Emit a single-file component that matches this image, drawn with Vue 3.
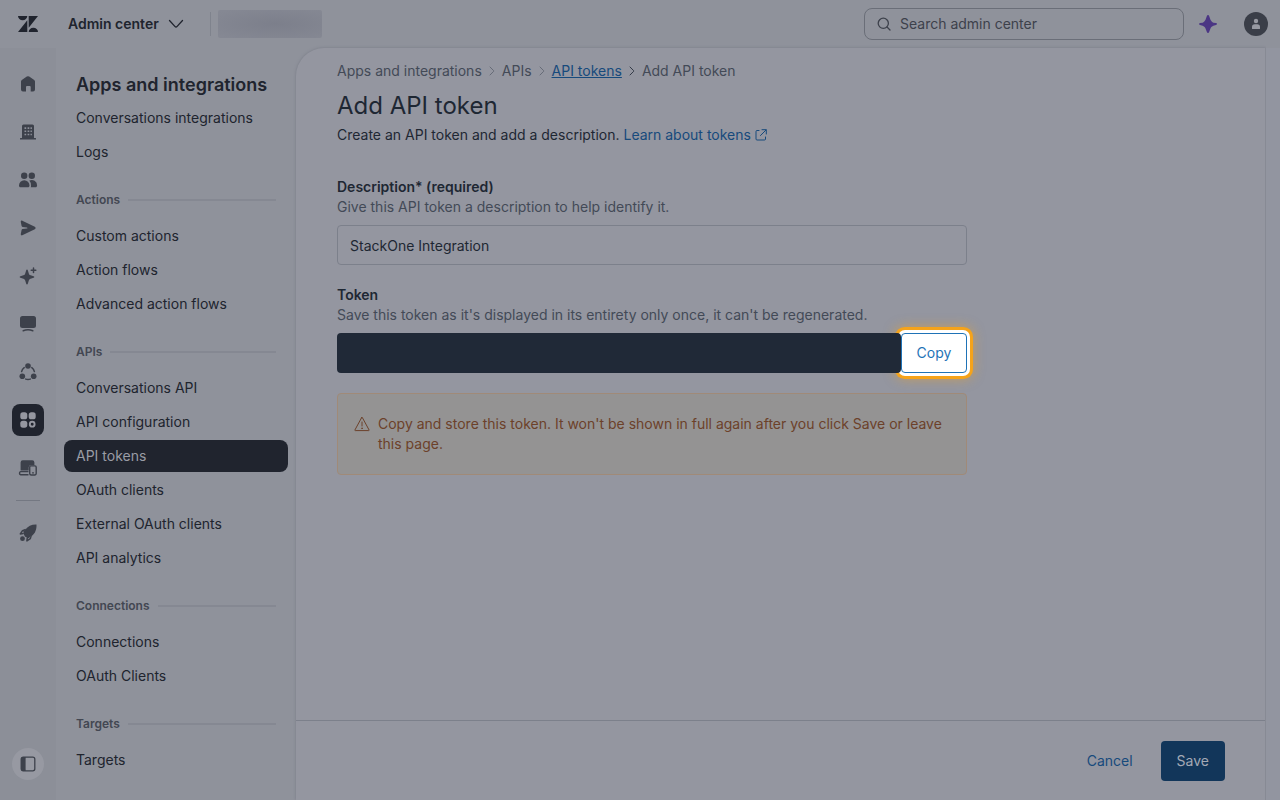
<template>
  <div class="app">
    <header class="topbar">
      <a href="#" class="logo" aria-label="Home">
        <svg width="20" height="16" viewBox="0 0 20 16" fill="currentColor">
          <path d="M9.3 4.3V16H0zM9.3 0A4.65 4.2 0 0 1 0 0zM10.7 16a4.65 4.2 0 0 1 9.3 0zM10.7 11.7V0H20z" />
        </svg>
      </a>
      <button type="button" class="product-switch">
        <span>Admin center</span>
        <svg width="16" height="16" viewBox="0 0 16 16" fill="none" stroke="currentColor" stroke-width="1.3" stroke-linecap="round">
          <path d="M1.5 4.5l5.6 6.1a1.2 1.2 0 0 0 1.8 0l5.6-6.1" />
        </svg>
      </button>
      <span class="divider"></span>
      <span class="account"></span>
      <label class="search">
        <svg width="14" height="14" viewBox="0 0 14 14" fill="none" stroke="currentColor" stroke-width="1.3" stroke-linecap="round">
          <circle cx="6.3" cy="6.3" r="5.1" />
          <path d="M10 10l3 3" />
        </svg>
        <input type="text" placeholder="Search admin center" aria-label="Search admin center" />
      </label>
      <button type="button" class="icon-btn copilot" aria-label="Copilot">
        <svg width="18" height="18" viewBox="0 0 16 16" fill="currentColor">
          <path d="M8 0c.5 0 .8.3 1 .9l1.200 3.300c.4 1 1.600 2.200 2.600 2.600l2.300.4c.6.2.9.4.9.8s-.3.700-.9.900l-2.300.700c-1 .4-2.200 1.400-2.600 2.400L9 15.100c-.2.600-.5.900-1 .9s-.8-.3-1-.9l-1.200-3.100c-.4-1-1.600-2-2.600-2.400L.9 8.900C.3 8.700 0 8.400 0 8s.3-.7.9-.9l2.300-.3c1-.4 2.200-1.600 2.600-2.600L7 .9C7.200.3 7.500 0 8 0z" />
        </svg>
      </button>
      <button type="button" class="icon-btn avatar" aria-label="Profile">
        <svg width="10" height="12" viewBox="0 0 10 12" fill="currentColor">
          <circle cx="5" cy="3" r="2.200" />
          <path d="M1 10.500V9a2.800 2.800 0 0 1 2.800-2.800h2.400A2.800 2.800 0 0 1 9 9v1.500a.5.5 0 0 1-.5.5h-7a.5.5 0 0 1-.5-.5z" />
        </svg>
      </button>
    </header>

    <div class="body">
      <nav class="rail" aria-label="Main">
        <a href="#" class="rail-item" aria-label="Home">
          <svg width="16" height="16" viewBox="0 0 16 16" fill="currentColor">
            <path d="M6.800.6a2 2 0 0 1 2.400 0l5 3.400c.5.400.8 1 .8 1.600V13.500a2 2 0 0 1-2 2h-2.300V11a1 1 0 0 0-1-1H7a1 1 0 0 0-1 1v4.500H3a2 2 0 0 1-2-2V5.600C1 5 1.300 4.400 1.800 4z" />
          </svg>
        </a>
        <a href="#" class="rail-item" aria-label="Account">
          <svg width="16" height="16" viewBox="0 0 16 16" fill="currentColor">
            <path fill-rule="evenodd" d="M3.500.5h9a1.500 1.500 0 0 1 1.500 1.500V14h1.400a.8.8 0 0 1 0 1.600H.6A.8.8 0 0 1 .6 14H2V2A1.500 1.500 0 0 1 3.500.5zM4.500 3.300v1.600h1.700V3.300zM7.600 3.300v1.600h1.700V3.300zM10.500 3.300v1.600h1.400V3.300zM4.500 6.500v1.600h1.700V6.500zM7.600 6.500v1.600h1.700V6.500zM10.500 6.500v1.600h1.400V6.500zM4.500 9.700v1.600h1.700V9.700zM7.600 9.700v1.600h1.700V9.700zM10.500 9.700v1.600h1.400V9.700z" />
          </svg>
        </a>
        <a href="#" class="rail-item" aria-label="People">
          <svg width="20" height="16" viewBox="0 0 20 16" fill="currentColor">
            <circle cx="6.200" cy="3.700" r="3.200" />
            <circle cx="13.800" cy="3.700" r="3.200" />
            <path d="M1 13.500A5.300 5.300 0 0 1 6.200 8.200a5.300 5.300 0 0 1 5.300 5.300c0 1-.6 1.800-1.600 1.800H2.600c-1 0-1.600-.8-1.600-1.800zM11.300 8.600a5.300 5.300 0 0 1 7.800 4.900c0 1-.7 1.800-1.700 1.800h-4.700c.3-.6.400-1.200.3-1.800a7 7 0 0 0-1.700-4.900z" />
          </svg>
        </a>
        <a href="#" class="rail-item" aria-label="Channels">
          <svg width="16" height="16" viewBox="0 0 16 16" fill="currentColor">
            <path d="M2.300.7l12.500 6.100c1 .5 1 1.900 0 2.400L2.300 15.300c-.8.4-1.700-.3-1.500-1.200L1.600 10c.1-.5.5-.8 1-.9l4.300-.5c.7-.1.7-1.100 0-1.200L2.600 6.900c-.5-.1-.9-.4-1-.9L.8 1.900C.6 1 1.500.3 2.300.7z" />
          </svg>
        </a>
        <a href="#" class="rail-item" aria-label="AI">
          <svg width="18" height="18" viewBox="0 0 18 18" fill="currentColor">
            <path d="M8 2.500c.4 0 .7.300.8.700l1 3.300c.3 1 .8 1.500 1.800 1.800l3 .9c.4.100.700.400.700.800s-.3.700-.7.800l-3 .9c-1 .3-1.500.8-1.800 1.800l-1 3.300c-.1.400-.4.700-.8.700s-.7-.3-.8-.7l-1-3.300c-.3-1-.8-1.500-1.800-1.800l-3-.9c-.4-.1-.7-.4-.7-.8s.3-.7.700-.8l3-.9c1-.3 1.500-.8 1.800-1.800l1-3.300c.1-.4.4-.7.800-.7z" />
            <path d="M14.500 1v4.600M12.200 3.300h4.600" stroke="currentColor" stroke-width="1.500" stroke-linecap="round" />
          </svg>
        </a>
        <a href="#" class="rail-item" aria-label="Workspaces">
          <svg width="18" height="16" viewBox="0 0 18 16" fill="currentColor">
            <rect x="1" y="0" width="16" height="12" rx="2.500" />
            <path d="M4.200 14.700Q9 12.800 13.800 14.700" fill="none" stroke="currentColor" stroke-width="1.500" stroke-linecap="round" />
          </svg>
        </a>
        <a href="#" class="rail-item" aria-label="Objects and rules">
          <svg width="18" height="18" viewBox="0 0 18 18" fill="currentColor">
            <circle cx="9" cy="3" r="2.800" />
            <circle cx="3.300" cy="13.200" r="2.800" />
            <circle cx="14.700" cy="13.200" r="2.800" />
            <path d="M5.200 4.600A6.500 6.500 0 0 0 2.600 8.600M12.800 4.600a6.500 6.500 0 0 1 2.600 4M6.700 16.100a6.800 6.800 0 0 0 4.600 0" fill="none" stroke="currentColor" stroke-width="1.500" stroke-linecap="round" />
          </svg>
        </a>
        <a href="#" class="rail-item active" aria-label="Apps and integrations">
          <svg width="16" height="16" viewBox="0 0 16 16" fill="currentColor">
            <rect x="0.300" y="0.300" width="7" height="7" rx="2.600" />
            <rect x="8.700" y="0.300" width="7" height="7" rx="2.600" />
            <rect x="0.300" y="8.700" width="7" height="7" rx="2.600" />
            <circle cx="12.200" cy="12.200" r="2.400" fill="none" stroke="currentColor" stroke-width="1.900" />
          </svg>
        </a>
        <a href="#" class="rail-item" aria-label="Devices">
          <svg width="20" height="16" viewBox="0 0 20 16" fill="currentColor">
            <path d="M2.600 10.500V2.500A2.200 2.200 0 0 1 4.800.3h9.400a2.200 2.200 0 0 1 2.200 2.200v2.800h-3.700a2 2 0 0 0-2 2v3.200z" />
            <path d="M10.500 11.600H2.700a1.600 1.600 0 0 0 0 3.100h7.800M12.700 5.900h4.200a1.300 1.300 0 0 1 1.300 1.300v6.300a1.500 1.500 0 0 1-1.500 1.500h-3.500a1.500 1.500 0 0 1-1.500-1.500V6.900a1 1 0 0 1 1-1z" fill="none" stroke="currentColor" stroke-width="1.400" />
            <circle cx="15" cy="12.800" r="0.900" />
          </svg>
        </a>
        <span class="rail-divider"></span>
        <a href="#" class="rail-item" aria-label="Get started">
          <svg width="18" height="18" viewBox="0 0 18 18" fill="currentColor">
            <path d="M17.500.6c.2 4.700-1 8.300-4.700 11.300L8.400 10 6.200 5.800C9 2.200 12.700.4 17.500.6z" />
            <path d="M6.700 5.500L3.500 6.700 1.300 9.900l3-.3M12.300 11.300l-1 3.300-3.400 2.300.4-3.200M4.800 8.700l1.700 2.800 2.800 1.800" fill="none" stroke="currentColor" stroke-width="1.500" stroke-linejoin="round" />
            <path d="M4.300 7.300l2.500-1.500 5.400 5.400-2.400 3-3.700-1.600z" />
            <circle cx="3.500" cy="14.700" r="2.400" />
          </svg>
        </a>
        <button type="button" class="rail-toggle" aria-label="Toggle navigation">
          <svg width="16" height="16" viewBox="0 0 16 16" fill="currentColor">
            <rect x="1.200" y="1.200" width="13.600" height="13.600" rx="2" fill="none" stroke="currentColor" stroke-width="1.300" />
            <path d="M1 3a2 2 0 0 1 2-2h2.600v14H3a2 2 0 0 1-2-2z" />
          </svg>
        </button>
      </nav>

      <aside class="sidebar">
        <h2 class="sidebar-title">Apps and integrations</h2>
        <template v-for="(section, i) in sections" :key="i">
          <h3 v-if="section.title" class="section-title">{{ section.title }}</h3>
          <ul class="menu">
            <li v-for="item in section.items" :key="item">
              <a href="#" class="menu-item" :class="{ active: item === current }">{{ item }}</a>
            </li>
          </ul>
        </template>
      </aside>

      <main class="panel">
        <div class="content">
          <nav class="breadcrumb" aria-label="Breadcrumb">
            <template v-for="(crumb, i) in crumbs" :key="crumb">
              <svg v-if="i > 0" :class="{ last: i === crumbs.length - 1 }" width="12" height="12" viewBox="0 0 12 12" fill="none" stroke="currentColor" stroke-linecap="round">
                <path d="M4 2l3.700 3.700a.5.5 0 0 1 0 .6L4 10" />
              </svg>
              <a v-if="crumb === current" href="#">{{ crumb }}</a>
              <span v-else>{{ crumb }}</span>
            </template>
          </nav>
          <h1>Add API token</h1>
          <p class="intro">
            Create an API token and add a description.
            <a href="#">Learn about tokens<svg width="12" height="12" viewBox="0 0 12 12" fill="none" stroke="currentColor" stroke-linecap="round">
              <path d="M4 1.500H2a1 1 0 0 0-1 1V10a1 1 0 0 0 1 1h7.500a1 1 0 0 0 1-1V8M7 .7h4.300V5M11 1L5.500 6.500" />
            </svg></a>
          </p>

          <div class="field">
            <label for="description">Description* (required)</label>
            <p class="hint">Give this API token a description to help identify it.</p>
            <input id="description" v-model="description" type="text" class="text-input" />
          </div>

          <div class="field">
            <label for="token">Token</label>
            <p class="hint">Save this token as it's displayed in its entirety only once, it can't be regenerated.</p>
            <div class="token-row">
              <input id="token" type="text" class="token-input" readonly />
              <button type="button" class="copy-btn">Copy</button>
            </div>
          </div>

          <div class="alert" role="alert">
            <svg width="16" height="16" viewBox="0 0 16 16" fill="none" stroke="currentColor" stroke-linecap="round" stroke-linejoin="round">
              <path d="M7.600 1.700L.9 14a.4.4 0 0 0 .4.600h13.400a.4.4 0 0 0 .4-.6L8.400 1.700a.45.45 0 0 0-.8 0zM8 6v4" />
              <circle cx="8" cy="12.300" r="0.500" fill="currentColor" stroke-width="0.600" />
            </svg>
            <p>Copy and store this token. It won't be shown in full again after you click Save or leave this page.</p>
          </div>
        </div>

        <footer class="actions">
          <button type="button" class="btn btn-basic">Cancel</button>
          <button type="button" class="btn btn-primary">Save</button>
        </footer>
      </main>
      <div class="gutter"></div>
    </div>
  </div>
</template>

<script setup>
import { ref } from 'vue'

const current = 'API tokens'
const description = ref('StackOne Integration')

const crumbs = ['Apps and integrations', 'APIs', 'API tokens', 'Add API token']

const sections = [
  { items: ['Conversations integrations', 'Logs'] },
  { title: 'Actions', items: ['Custom actions', 'Action flows', 'Advanced action flows'] },
  {
    title: 'APIs',
    items: [
      'Conversations API',
      'API configuration',
      'API tokens',
      'OAuth clients',
      'External OAuth clients',
      'API analytics'
    ]
  },
  { title: 'Connections', items: ['Connections', 'OAuth Clients'] },
  { title: 'Targets', items: ['Targets'] }
]
</script>

<style>
body {
  margin: 0;
  background: #8f929b;
}
</style>

<style scoped>
.app {
  display: flex;
  flex-direction: column;
  min-height: 100vh;
  font-family: Inter, "Liberation Sans", sans-serif;
  font-size: 14px;
  line-height: 20px;
  color: #20242e;
  background: #8f929b;
}

.app * {
  box-sizing: border-box;
}

h1,
h2,
h3,
p,
ul {
  margin: 0;
  padding: 0;
}

button,
input {
  font: inherit;
  color: inherit;
  margin: 0;
}

button {
  border: 0;
  padding: 0;
  background: none;
  cursor: pointer;
}

svg {
  flex-shrink: 0;
}

/* top bar */
.topbar {
  display: flex;
  align-items: center;
  height: 48px;
  padding: 0 12px 0 18px;
}

.logo {
  display: flex;
  margin-right: 30px;
  color: #20242e;
}

.product-switch {
  display: flex;
  align-items: center;
  gap: 9px;
  font-weight: 600;
}

.divider {
  width: 1px;
  height: 24px;
  margin: 0 7px 0 26px;
  background: #7f838d;
}

.account {
  width: 104px;
  height: 28px;
  border-radius: 2px;
  background: radial-gradient(ellipse at 55% 50%, #7c7f8b, #858893 90%);
}

.search {
  display: flex;
  align-items: center;
  gap: 9px;
  width: 320px;
  height: 32px;
  margin-left: auto;
  padding: 0 12px;
  border: 1px solid #6a6e78;
  border-radius: 8px;
  color: #3d414b;
}

.search input {
  flex: 1;
  min-width: 0;
  padding: 0;
  border: 0;
  outline: 0;
  background: transparent;
}

.search input::placeholder {
  color: #3d414b;
  opacity: 1;
}

.icon-btn {
  display: flex;
  align-items: center;
  justify-content: center;
  width: 24px;
  height: 24px;
}

.copilot {
  margin: 0 24px 0 12px;
  color: #4b3684;
}

.avatar {
  border-radius: 50%;
  background: #3a3e48;
  color: #9799a2;
}

/* body */
.body {
  display: flex;
  flex: 1;
}

.rail {
  display: flex;
  flex-direction: column;
  align-items: center;
  gap: 16px;
  width: 56px;
  padding: 20px 0;
  background: #8c8f98;
}

.rail-item,
.rail-toggle {
  display: flex;
  align-items: center;
  justify-content: center;
  width: 32px;
  height: 32px;
  color: #3d414b;
}

.rail-item.active {
  border-radius: 8px;
  background: #20242e;
  color: #9597a0;
}

.rail-divider {
  width: 24px;
  height: 1px;
  background: #747882;
}

.rail-toggle {
  margin-top: auto;
  border-radius: 50%;
  background: #9799a2;
}

.sidebar {
  width: 240px;
  padding: 24px 8px;
}

.sidebar-title {
  padding: 0 12px;
  margin-bottom: 4px;
  font-size: 18px;
  line-height: 26px;
  font-weight: 600;
}

.section-title {
  display: flex;
  align-items: center;
  gap: 8px;
  margin: 24px 12px 12px;
  font-size: 12px;
  line-height: 16px;
  font-weight: 600;
  color: #434752;
}

.section-title::after {
  content: '';
  flex: 1;
  height: 2px;
  background: #858892;
}

.menu {
  display: flex;
  flex-direction: column;
  gap: 2px;
  list-style: none;
}

.menu-item {
  display: block;
  padding: 6px 12px;
  border-radius: 8px;
  color: inherit;
  text-decoration: none;
}

.menu-item.active {
  background: #20242e;
  color: #9a9ca5;
}

/* panel */
.panel {
  display: flex;
  flex: 1;
  flex-direction: column;
  min-width: 0;
  border-right: 1px solid #878a94;
  border-top-left-radius: 28px;
  background: #9496a0;
  box-shadow: 0 0 3px #777a85;
  clip-path: inset(-4px 0 0 -4px);
}

.gutter {
  width: 14px;
  background: #9295a0;
}

.content {
  flex: 1;
  padding: 13px 41px 40px;
}

.content > * {
  max-width: 630px;
}

.content a {
  color: #174a7c;
}

.breadcrumb {
  display: flex;
  align-items: center;
  gap: 4px;
  color: #434a57;
}

.breadcrumb svg {
  color: #666b77;
}

.breadcrumb svg.last {
  color: #333a47;
}

h1 {
  margin: 9px 0 3px;
  font-size: 24px;
  line-height: 32px;
  font-weight: 400;
  color: #1e2733;
}

.intro {
  color: #1e2733;
}

.content .intro a {
  text-decoration: none;
}

.intro svg {
  margin-left: 4px;
  vertical-align: -1px;
}

.field {
  margin-bottom: 20px;
}

.intro + .field {
  margin-top: 32px;
}

.field label {
  display: block;
  font-weight: 600;
  color: #1e2733;
}

.hint {
  color: #434a57;
}

.text-input {
  display: block;
  width: 100%;
  height: 40px;
  margin-top: 8px;
  padding: 0 12px;
  border: 1px solid #7c808b;
  border-radius: 4px;
  outline: 0;
  background: transparent;
  color: #1e2733;
}

.token-row {
  display: flex;
  margin-top: 8px;
}

.token-input {
  position: relative;
  z-index: 1;
  flex: 1;
  min-width: 0;
  height: 40px;
  padding: 0 12px;
  border: 0;
  border-radius: 4px;
  outline: 0;
  background: #202937;
}

.copy-btn {
  width: 66px;
  height: 40px;
  border: 1px solid #1f73b7;
  border-radius: 4px;
  background: #fff;
  color: #1f73b7;
  box-shadow: 0 0 0 3px #fff, 0 0 0 6px #f5a31a, 0 0 12px 6px rgba(245, 163, 26, 0.5);
}

.alert {
  display: flex;
  gap: 8px;
  padding: 20px 16px;
  border: 1px solid #a08a78;
  border-radius: 4px;
  background: #949393;
  color: #6c412a;
}

.alert svg {
  margin-top: 2px;
}

.actions {
  display: flex;
  justify-content: flex-end;
  gap: 12px;
  padding: 20px 40px 19px;
  border-top: 1px solid #7c808b;
}

.btn {
  height: 40px;
  padding: 0 16px;
  border-radius: 4px;
}

.btn-basic {
  color: #174a7c;
}

.btn-primary {
  background: #12365a;
  color: #a3a9b5;
}
</style>
